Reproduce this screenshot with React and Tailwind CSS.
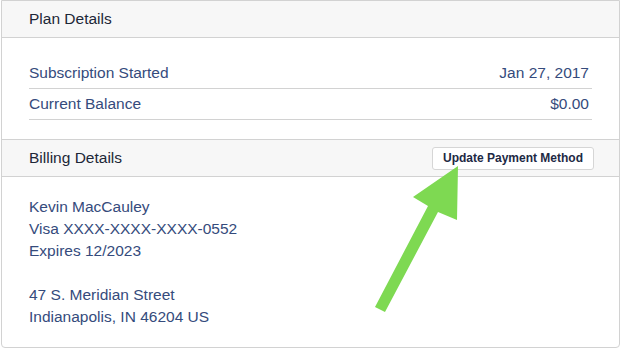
export default function App() {
  return (
    <div className="relative w-[621px] h-[350px] bg-white font-['Liberation_Sans',Arial,sans-serif]">
      <div className="ml-px mr-px border border-[#d2d2d2] rounded-b-[4px] overflow-hidden">
        {/* Plan details */}
        <div className="h-[37px] bg-[#f7f7f7] border-b border-[#d2d2d2] flex items-center px-[27px] text-[15.5px] text-[#1d2738]">
          Plan Details
        </div>
        <div className="px-[27px] pt-[20px] pb-[19px] text-[15.5px] text-[#354b7c]">
          <div className="h-[31px] border-b border-[#d2d2d2] flex items-center justify-between pr-[3px]">
            <span>Subscription Started</span>
            <span>Jan 27, 2017</span>
          </div>
          <div className="h-[31px] border-b border-[#d2d2d2] flex items-center justify-between pr-[3px]">
            <span>Current Balance</span>
            <span>$0.00</span>
          </div>
        </div>

        {/* Billing details */}
        <div className="h-[38px] bg-[#f7f7f7] border-y border-[#d2d2d2] flex items-center justify-between pl-[27px] pr-[25px] text-[15.5px] text-[#1d2738]">
          <span>Billing Details</span>
          <button className="h-[23px] px-[10px] bg-white border border-[#d6d6d6] rounded-[3px] text-[12px] font-bold text-[#1d2944]">
            Update Payment Method
          </button>
        </div>
        <div className="px-[27px] pt-[19px] pb-[19px] text-[15.5px] leading-[22px] text-[#354b7c]">
          <div>Kevin MacCauley</div>
          <div>Visa XXXX-XXXX-XXXX-0552</div>
          <div>Expires 12/2023</div>
          <div className="mt-[22px]">47 S. Meridian Street</div>
          <div>Indianapolis, IN 46204 US</div>
        </div>
      </div>

      {/* annotation arrow */}
      <svg className="absolute left-0 top-0 pointer-events-none" width="621" height="350">
        <polygon
          points="458,166 413,197 428,206 375,307 385,312 438,212 457,220"
          fill="#7ed952"
        />
      </svg>
    </div>
  )
}
